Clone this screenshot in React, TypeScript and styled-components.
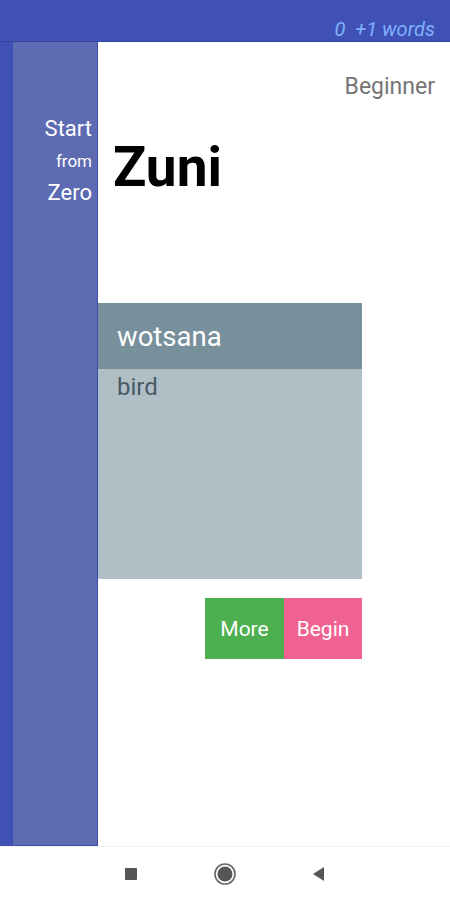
import React from 'react';
import styled, { createGlobalStyle } from 'styled-components';

const GlobalStyle = createGlobalStyle`
    html, body {
        margin: 0;
        padding: 0;
        background: #ffffff;
        font-family: Roboto, "Noto Sans", "Liberation Sans", sans-serif;
    }
`;

const Screen = styled.div`
    width: 450px;
    height: 900px;
    display: flex;
    flex-direction: column;
    overflow: hidden;
`;

const Frame = styled.div`
    height: 846px;
    display: flex;
    flex-direction: column;
    background: #3f51b5;
`;

const TopBar = styled.div`
    height: 42px;
    display: flex;
    align-items: center;
    justify-content: flex-end;
    padding-right: 15px;
    box-sizing: border-box;
    border-bottom: 1px solid #33449c;
`;

const WordCount = styled.span`
    font-size: 20px;
    font-style: italic;
    color: #7fb0fb;
    padding-top: 17px;
    white-space: pre;
`;

const Body = styled.div`
    flex: 1;
    display: flex;
    padding-left: 13px;
    min-height: 0;
`;

const Sidebar = styled.div`
    width: 85px;
    flex-shrink: 0;
    box-sizing: border-box;
    background: #5c6bb2;
    border-right: 1px solid #3c4ea8;
    border-bottom: 1px solid #3c4ea8;
    display: flex;
    flex-direction: column;
    align-items: flex-end;
    padding: 70px 5px 0 0;
    color: #ffffff;
`;

const SideWord = styled.div<{ $small?: boolean }>`
    font-size: ${p => (p.$small ? '17px' : '22px')};
    line-height: ${p => (p.$small ? '30px' : '34px')};
`;

const Main = styled.div`
    flex: 1;
    background: #ffffff;
    display: flex;
    flex-direction: column;
    padding-top: 32px;
`;

const Level = styled.div`
    align-self: flex-end;
    margin-right: 15px;
    font-size: 23px;
    line-height: 26px;
    color: #757575;
`;

const Title = styled.h1`
    margin: 37px 0 0 15px;
    font-size: 55px;
    line-height: 60px;
    font-weight: 700;
    color: #000000;
`;

const Card = styled.div`
    width: 264px;
    margin-top: 106px;
    display: flex;
    flex-direction: column;
`;

const CardHead = styled.div`
    height: 66px;
    background: #78909c;
    color: #ffffff;
    font-size: 27.5px;
    display: flex;
    align-items: center;
    padding-left: 19px;
`;

const CardBody = styled.div`
    height: 210px;
    background: #b0bec5;
    color: #455a64;
    font-size: 24px;
    padding: 4px 0 0 19px;
    box-sizing: border-box;
`;

const Actions = styled.div`
    width: 264px;
    display: flex;
    justify-content: flex-end;
    margin-top: 19px;
`;

const ActionButton = styled.button<{ $color: string; $width: number }>`
    width: ${p => p.$width}px;
    height: 61px;
    border: none;
    margin: 0;
    background: ${p => p.$color};
    color: #ffffff;
    font-family: inherit;
    font-size: 21px;
    padding: 0;
`;

const NavBar = styled.div`
    flex: 1;
    display: flex;
    align-items: center;
    justify-content: center;
    gap: 70px;
    background: #ffffff;
    border-top: 1px solid #f2f2f2;
`;

const NavIcon = styled.svg`
    width: 24px;
    height: 24px;
    display: block;
`;

const App = () => {
    return (
        <Screen>
            <GlobalStyle />
            <Frame>
                <TopBar>
                    <WordCount>0  +1 words</WordCount>
                </TopBar>
                <Body>
                    <Sidebar>
                        <SideWord>Start</SideWord>
                        <SideWord $small>from</SideWord>
                        <SideWord>Zero</SideWord>
                    </Sidebar>
                    <Main>
                        <Level>Beginner</Level>
                        <Title>Zuni</Title>
                        <Card>
                            <CardHead>wotsana</CardHead>
                            <CardBody>bird</CardBody>
                        </Card>
                        <Actions>
                            <ActionButton $color="#4caf50" $width={79}>More</ActionButton>
                            <ActionButton $color="#f06292" $width={78}>Begin</ActionButton>
                        </Actions>
                    </Main>
                </Body>
            </Frame>
            <NavBar>
                <NavIcon viewBox="0 0 24 24">
                    <rect x="6" y="6" width="12" height="12" rx="1" fill="#555555" />
                </NavIcon>
                <NavIcon viewBox="0 0 24 24">
                    <circle cx="12" cy="12" r="10" fill="none" stroke="#666666" strokeWidth="1.6" />
                    <circle cx="12" cy="12" r="7.5" fill="#555555" />
                </NavIcon>
                <NavIcon viewBox="0 0 24 24">
                    <path d="M6 12 L17 5 L17 19 Z" fill="#555555" />
                </NavIcon>
            </NavBar>
        </Screen>
    );
};

export default App;
